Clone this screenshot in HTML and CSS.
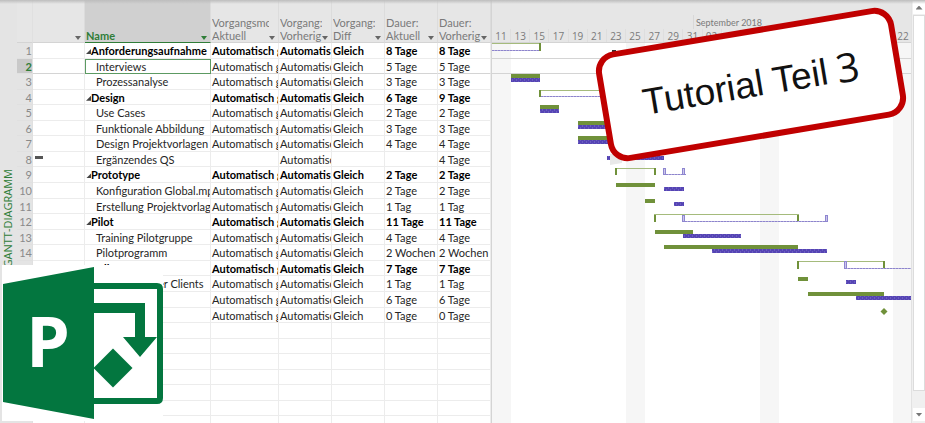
FILE: index.html
```html
<!DOCTYPE html>
<html lang="de">
<head>
<meta charset="utf-8">
<title>Gantt-Diagramm</title>
<link rel="stylesheet" href="styles.css">
</head>
<body>
<div class="app">
  <aside class="view-label"><span>GANTT-DIAGRAMM</span></aside>
  <table class="tasks">
    <thead>
      <tr>
        <th class="corner"></th>
        <th><button class="filter" aria-label="Filter"></button></th>
        <th class="active"><span>Name</span><button class="filter" aria-label="Filter Name"></button></th>
        <th><span>Vorgangsmo<br>Aktuell</span><button class="filter" aria-label="Filter"></button></th>
        <th><span>Vorgang:<br>Vorherig</span><button class="filter" aria-label="Filter"></button></th>
        <th><span>Vorgang:<br>Diff</span><button class="filter" aria-label="Filter"></button></th>
        <th><span>Dauer:<br>Aktuell</span><button class="filter" aria-label="Filter"></button></th>
        <th><span>Dauer:<br>Vorherig</span><button class="filter" aria-label="Filter"></button></th>
      </tr>
    </thead>
    <tbody>
      <tr class="summary"><th>1</th><td></td><td>Anforderungsaufnahme</td><td>Automatisch g</td><td>Automatis</td><td>Gleich</td><td>8 Tage</td><td>8 Tage</td></tr>
      <tr class="selected"><th>2</th><td></td><td>Interviews</td><td>Automatisch g</td><td>Automatisc</td><td>Gleich</td><td>5 Tage</td><td>5 Tage</td></tr>
      <tr><th>3</th><td></td><td>Prozessanalyse</td><td>Automatisch g</td><td>Automatisc</td><td>Gleich</td><td>3 Tage</td><td>3 Tage</td></tr>
      <tr class="summary"><th>4</th><td></td><td>Design</td><td>Automatisch g</td><td>Automatis</td><td>Gleich</td><td>6 Tage</td><td>9 Tage</td></tr>
      <tr><th>5</th><td></td><td>Use Cases</td><td>Automatisch g</td><td>Automatisc</td><td>Gleich</td><td>2 Tage</td><td>2 Tage</td></tr>
      <tr><th>6</th><td></td><td>Funktionale Abbildung</td><td>Automatisch g</td><td>Automatisc</td><td>Gleich</td><td>3 Tage</td><td>3 Tage</td></tr>
      <tr><th>7</th><td></td><td>Design Projektvorlagen</td><td>Automatisch g</td><td>Automatisc</td><td>Gleich</td><td>4 Tage</td><td>4 Tage</td></tr>
      <tr><th>8</th><td><i class="dash"></i></td><td>Ergänzendes QS</td><td></td><td>Automatisc</td><td></td><td></td><td>4 Tage</td></tr>
      <tr class="summary"><th>9</th><td></td><td>Prototype</td><td>Automatisch g</td><td>Automatis</td><td>Gleich</td><td>2 Tage</td><td>2 Tage</td></tr>
      <tr><th>10</th><td></td><td>Konfiguration Global.mp</td><td>Automatisch g</td><td>Automatisc</td><td>Gleich</td><td>2 Tage</td><td>2 Tage</td></tr>
      <tr><th>11</th><td></td><td>Erstellung Projektvorlag</td><td>Automatisch g</td><td>Automatisc</td><td>Gleich</td><td>1 Tag</td><td>1 Tag</td></tr>
      <tr class="summary"><th>12</th><td></td><td>Pilot</td><td>Automatisch g</td><td>Automatis</td><td>Gleich</td><td>11 Tage</td><td>11 Tage</td></tr>
      <tr><th>13</th><td></td><td>Training Pilotgruppe</td><td>Automatisch g</td><td>Automatisc</td><td>Gleich</td><td>4 Tage</td><td>4 Tage</td></tr>
      <tr><th>14</th><td></td><td>Pilotprogramm</td><td>Automatisch g</td><td>Automatisc</td><td>Gleich</td><td>2 Wochen</td><td>2 Wochen</td></tr>
      <tr class="summary"><th>15</th><td></td><td>Rollout</td><td>Automatisch g</td><td>Automatis</td><td>Gleich</td><td>7 Tage</td><td>7 Tage</td></tr>
      <tr><th>16</th><td></td><td>Installation der Clients</td><td>Automatisch g</td><td>Automatisc</td><td>Gleich</td><td>1 Tag</td><td>1 Tag</td></tr>
      <tr><th></th><td></td><td></td><td>Automatisch g</td><td>Automatisc</td><td>Gleich</td><td>6 Tage</td><td>6 Tage</td></tr>
      <tr><th></th><td></td><td></td><td>Automatisch g</td><td>Automatisc</td><td>Gleich</td><td>0 Tage</td><td>0 Tage</td></tr>
      <tr><th></th><td></td><td></td><td></td><td></td><td></td><td></td><td></td></tr>
      <tr><th></th><td></td><td></td><td></td><td></td><td></td><td></td><td></td></tr>
      <tr><th></th><td></td><td></td><td></td><td></td><td></td><td></td><td></td></tr>
      <tr><th></th><td></td><td></td><td></td><td></td><td></td><td></td><td></td></tr>
      <tr><th></th><td></td><td></td><td></td><td></td><td></td><td></td><td></td></tr>
      <tr><th></th><td></td><td></td><td></td><td></td><td></td><td></td><td></td></tr>
      <tr><th></th><td></td><td></td><td></td><td></td><td></td><td></td><td></td></tr>
    </tbody>
  </table>
  <section class="timeline">
    <header class="scale">
      <div class="month">September 2018</div>
      <div class="days">
        <span>11</span><span>13</span><span>15</span><span>17</span><span>19</span><span>21</span><span>23</span><span>25</span><span>27</span><span>29</span><span>31</span><span>02</span><span></span><span></span><span></span><span></span><span></span><span></span><span></span><span></span><span></span><span>22</span>
      </div>
    </header>
    <svg class="chart" aria-hidden="true">
      <defs>
        <pattern id="hatch" width="4" height="4" patternUnits="userSpaceOnUse">
          <rect width="4" height="4" fill="#5544b4"/>
          <path d="M0 1h1M2 3h1" stroke="#8175cd" stroke-width="1"/>
        </pattern>
      </defs>
      <!-- weekends -->
      <g fill="#f6f6f6">
        <rect x="0" y="0" width="19" height="100%"/>
        <rect x="134" y="0" width="19" height="100%"/>
        <rect x="268" y="0" width="19" height="100%"/>
        <rect x="401" y="0" width="19" height="100%"/>
      </g>
      <path d="M0 15.5H2000M0 30.5H2000" stroke="#d4d4d4"/>
      <!-- current summary brackets -->
      <g fill="none" stroke="#a5bb7c">
        <path d="M0 .5H49M47 47.5H140M123 125.5H164M162 171.5H307M305 218.5H393"/>
      </g>
      <g fill="#70913a">
        <rect x="47" y="0" width="2" height="8"/>
        <rect x="47" y="47" width="2" height="7"/>
        <rect x="123" y="125" width="2" height="7"/>
        <rect x="162" y="125" width="2" height="7"/>
        <rect x="162" y="172" width="2" height="7"/>
        <rect x="305" y="172" width="2" height="7"/>
        <rect x="305" y="218" width="2" height="8"/>
        <rect x="391" y="218" width="2" height="8"/>
      </g>
      <!-- previous summary brackets -->
      <path d="M0 7.5H47M49 53.5H120M171 131.5H194M190 178.5H336M353 225.5H2000" stroke="#b3aede"/>
      <path d="M0 7.5H47M49 53.5H120M171 131.5H194M190 178.5H336M353 225.5H2000" stroke="#8d84cc" stroke-dasharray="2 1"/>
      <g fill="#cbc6ea" stroke="#8e86d0">
        <rect x="171.500" y="125.500" width="2" height="6"/>
        <rect x="190.500" y="125.500" width="2" height="6"/>
        <rect x="190.500" y="172.500" width="2" height="6"/>
        <rect x="333.500" y="172.500" width="2" height="6"/>
        <rect x="352.500" y="218.500" width="2" height="7"/>
      </g>
      <!-- current tasks -->
      <g fill="#70913a">
        <rect x="19" y="31" width="29" height="4"/>
        <rect x="48" y="62" width="19" height="4"/>
        <rect x="86" y="78" width="29" height="4"/>
        <rect x="86" y="93" width="38" height="4"/>
        <rect x="124" y="140" width="39" height="4"/>
        <rect x="153" y="156" width="10" height="4"/>
        <rect x="163" y="187" width="38" height="4"/>
        <rect x="172" y="202" width="134" height="4"/>
        <rect x="306" y="234" width="10" height="4"/>
        <rect x="316" y="249" width="76" height="4"/>
        <path d="M392 265l3.500 3.500-3.500 3.500-3.500-3.500z"/>
      </g>
      <!-- previous tasks -->
      <g fill="url(#hatch)">
        <rect x="19" y="35" width="29" height="4"/>
        <rect x="48" y="66" width="19" height="4"/>
        <rect x="86" y="82" width="29" height="4"/>
        <rect x="86" y="97" width="38" height="4"/>
        <rect x="115" y="113" width="57" height="4"/>
        <rect x="172" y="144" width="20" height="4"/>
        <rect x="182" y="159" width="10" height="4"/>
        <rect x="191" y="191" width="58" height="4"/>
        <rect x="220" y="206" width="115" height="4"/>
        <rect x="354" y="237" width="10" height="4"/>
        <rect x="364" y="253" width="2000" height="4"/>
      </g>
      <path d="M118 111h12v9l-12 2z" fill="#e9e9e9"/>
      <rect x="120" y="7" width="4" height="3" fill="#333"/>
    </svg>
  </section>
  <div class="scrollbar">
    <button class="step up" aria-label="Nach oben"></button>
    <div class="thumb"></div>
    <button class="step down" aria-label="Nach unten"></button>
  </div>
</div>
<div class="callout"><span>Tutorial Teil</span> <b>3</b></div>
<svg class="logo" viewBox="0 0 161 156" role="img" aria-label="Project">
  <rect width="161" height="156" fill="#fff"/>
  <path d="M88 21h67q3 0 3 3v109q0 3-3 3H88" fill="none" stroke="#03763f" stroke-width="6"/>
  <path d="M92 38h51v34h12l-17 20-17-20h12V48H92z" fill="#03763f"/>
  <path d="M111 83.500l19.500 19.500-19.500 19.500L91.500 103z" fill="#03763f"/>
  <path d="M1 19L92 2v152L1 137z" fill="#03763f"/>
  <text x="24" y="102" class="logo-letter">P</text>
</svg>
</body>
</html>
```
FILE: styles.css
```css
* { box-sizing: border-box; }

body {
  margin: 0;
  height: 100vh;
  overflow: hidden;
  position: relative;
  background: #fff;
  color: #262626;
  font: 11px/15px "Lato", "Noto Sans", sans-serif;
}

button { padding: 0; border: 0; background: none; }

.app { display: flex; height: 100vh; overflow: hidden; }

.app::before {
  content: "";
  position: absolute;
  inset: 0 0 auto;
  height: 4px;
  background: linear-gradient(#bdbdbd, transparent);
}

.view-label {
  flex: 0 0 17px;
  padding-top: 169px;
  background: #e4e4e4;
  color: #2f7d38;
  font: 11px/15px "Open Sans", sans-serif;
}

.view-label span {
  display: block;
  writing-mode: vertical-rl;
  transform: rotate(180deg);
  white-space: nowrap;
}

/* Task table */
.tasks { display: block; flex: none; }
.tasks thead, .tasks tbody { display: grid; }
.tasks thead { line-height: 13px; }
.tasks tbody { grid-auto-rows: minmax(0, 1fr); height: 389px; line-height: 15px; }

.tasks tr {
  display: grid;
  grid-template-columns: 16px 52px 126px 68px 53px 53px 53px 53px;
  grid-template-rows: minmax(0, 1fr);
}

.tasks thead tr { height: 43px; background: #e6e6e6; color: #7a7a7a; }

.tasks thead th {
  display: flex;
  align-items: flex-end;
  justify-content: space-between;
  min-width: 0;
  padding: 0 3px 0 1px;
  border-right: 1px solid #dcdcdc;
  border-bottom: 1px solid #d4d4d4;
  font-weight: 400;
  text-align: left;
}

.tasks thead span { flex: 1; overflow: hidden; white-space: nowrap; }
.tasks thead .corner { border-right-color: #e0e0e0; }

.tasks thead .active {
  border-bottom: 1px solid #2f7d38;
  background: #d0d0d0;
  color: #2f7d38;
  font-weight: 700;
}

.filter {
  flex: none;
  width: 6px;
  height: 4px;
  margin-bottom: 2px;
  background: #666;
  clip-path: polygon(0 0, 100% 0, 50% 100%);
}

.tasks thead th:nth-child(2) { justify-content: flex-end; }
.active .filter { background: #2f7d38; }

.tasks td, .tasks tbody th {
  min-width: 0;
  padding: 0 0 0 1px;
  overflow: hidden;
  border-right: 1px solid #ececec;
  border-bottom: 1px solid #ececec;
  white-space: nowrap;
}

.tasks tbody th {
  padding: 0;
  border-color: #e0e0e0;
  background: #e4e4e4;
  color: #8a8a8a;
  font-weight: 400;
  text-align: right;
}

.tasks td:nth-child(3) { padding-left: 11px; }
.summary td { color: #000; font-weight: 700; }
.tasks .summary td:nth-child(3) { padding-left: 1px; }

.summary td:nth-child(3)::before {
  content: "";
  display: inline-block;
  width: 5px;
  height: 5px;
  margin-bottom: 1px;
  background: #444;
  clip-path: polygon(100% 0, 100% 100%, 0 100%);
}

.tasks .selected th { background: #c9c9c9; color: #2f7d38; font-weight: 700; }
.selected td { border-bottom-color: #d4d4d4; }
.selected td:nth-child(3) { outline: 1px solid #5c9a62; outline-offset: -1px; }

.dash {
  display: block;
  width: 8px;
  height: 3px;
  margin: 4px 0 0 1px;
  background: #555;
}

/* Timeline */
.timeline {
  flex: 1;
  display: flex;
  flex-direction: column;
  min-width: 0;
  overflow: hidden;
  border-left: 1px solid #d4d4d4;
}

.scale {
  flex: 0 0 43px;
  padding-top: 15px;
  border-bottom: 1px solid #d4d4d4;
  background: #e6e6e6;
  color: #7a7a7a;
  font: 10px/15px "Open Sans", sans-serif;
}

.month {
  height: 14px;
  margin-left: 201px;
  padding-left: 2px;
  border-left: 1px solid #d8d8d8;
  font-size: 9px;
  font-family: "Lato", sans-serif;
}

.days { display: grid; grid-template-columns: repeat(22, 1fr); margin-right: -2px; text-align: center; }
.days span { height: 13px; border-right: 1px solid #dedede; }
.chart { display: block; flex: 1; width: 100%; min-height: 0; }

/* Scrollbar */
.scrollbar {
  flex: 0 0 14px;
  display: flex;
  flex-direction: column;
  padding: 1px 0 2px 1px;
  border-left: 1px solid #e2e2e2;
  background: #f0f0f0;
}

.step { display: grid; place-items: center; height: 13px; background: #fff; }
.step::before { content: ""; width: 7px; height: 4px; background: #777; clip-path: polygon(0 0, 100% 0, 50% 100%); }
.up::before { clip-path: polygon(50% 0, 100% 100%, 0 100%); }
.thumb { flex: 1; margin: 1px 0 17px; border: 1px solid #dcdcdc; background: #fff; }

/* Overlays */
.callout {
  position: absolute;
  top: 29px;
  left: 600px;
  display: flex;
  align-items: center;
  justify-content: center;
  gap: 9px;
  width: 302px;
  height: 111px;
  border: 6px solid #c00000;
  border-radius: 20px;
  background: #fff;
  color: #111;
  font: 37px/44px "Liberation Sans", Arial, sans-serif;
  transform: rotate(-9.500deg);
}

.callout b { padding-bottom: 4px; font: 500 40px/44px "Open Sans", sans-serif; }

.logo { position: absolute; top: 265px; left: 2px; width: 161px; height: 156px; }
.logo-letter { fill: #fff; font: 700 70px "Open Sans", sans-serif; }
```
